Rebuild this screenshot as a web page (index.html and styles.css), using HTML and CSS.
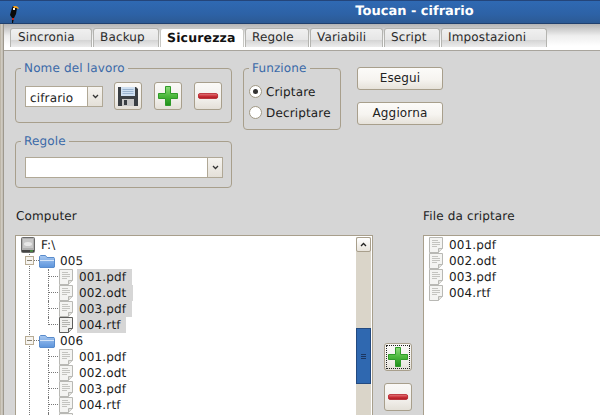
FILE: index.html
```html
<!DOCTYPE html>
<html lang="it">
<head>
<meta charset="utf-8">
<title>Toucan - cifrario</title>
<link rel="stylesheet" href="styles.css">
</head>
<body>
<svg class="defs" width="0" height="0" aria-hidden="true">
  <defs>
    <linearGradient id="gGreen" x1="0" y1="0" x2="0" y2="1"><stop offset="0" stop-color="#8fdc7c"/><stop offset=".5" stop-color="#4cb83c"/><stop offset="1" stop-color="#1f8f1a"/></linearGradient>
    <linearGradient id="gRed" x1="0" y1="0" x2="0" y2="1"><stop offset="0" stop-color="#e88a8a"/><stop offset=".5" stop-color="#cc3038"/><stop offset="1" stop-color="#a81c24"/></linearGradient>
    <linearGradient id="gFolder" x1="0" y1="0" x2="0" y2="1"><stop offset="0" stop-color="#a8c8f0"/><stop offset="1" stop-color="#5c94dc"/></linearGradient>
    <symbol id="plus" viewBox="0 0 22 22"><path d="M8.500 1.500h5v7h7v5h-7v7h-5v-7h-7v-5h7z" fill="url(#gGreen)" stroke="#2f9a28" stroke-width="1" stroke-linejoin="round"/></symbol>
    <symbol id="minus" viewBox="0 0 22 8"><rect x=".5" y="1.500" width="20" height="5" rx="1.500" fill="url(#gRed)" stroke="#b82830"/></symbol>
    <symbol id="floppy" viewBox="0 0 20 20"><path d="M0 1h18l2 2v17H0z" fill="#3a3f44"/><rect x="3" y="1" width="14" height="9" fill="#cfe0f2"/><path d="M4.500 3.500h11M4.500 5.500h11M4.500 7.500h11" stroke="#9ab4d0"/><rect x="4" y="13" width="12" height="7" fill="#c8c8c8"/><rect x="6" y="14" width="3" height="5" fill="#3a3f44"/></symbol>
    <symbol id="file" viewBox="0 0 14 16"><path d="M.5.500h13v11l-4 4h-9z" fill="#f4f4f2" stroke="#b8b8b4"/><path d="M9.500 15.500v-4h4" fill="#e0e0dc" stroke="#b8b8b4"/><path d="M3 3.500h6M3 5.500h8M3 7.500h8M3 9.500h5" stroke="#c4c4c0"/></symbol>
    <symbol id="fileDark" viewBox="0 0 14 16"><path d="M.5.500h13v11l-4 4h-9z" fill="#f0f0ee" stroke="#5e5e5c"/><path d="M9.500 15.500v-4h4" fill="#d8d8d4" stroke="#5e5e5c"/><path d="M3 3.500h6M3 5.500h8M3 7.500h8M3 9.500h5" stroke="#b4b4b0"/></symbol>
    <symbol id="folder" viewBox="0 0 16 14"><path d="M.5 13V2.500l1-1h5l1.500 2h7l.5 1V13l-.5.5H1z" fill="url(#gFolder)" stroke="#5a8ccc"/><path d="M1 6.500h14" stroke="#d4e4f8"/></symbol>
    <symbol id="drive" viewBox="0 0 14 16"><rect x=".5" y=".5" width="13" height="15" rx="1" fill="#b0b0b0" stroke="#6a6a6a"/><rect x="2" y="2" width="10" height="9" fill="#c8c8c8"/><ellipse cx="7" cy="7" rx="4" ry="2" fill="#e8e8e8"/><rect x="1" y="13" width="12" height="2" fill="#444"/><rect x="9" y="13.500" width="3" height="1" fill="#4ac040"/></symbol>
  </defs>
</svg>

<div class="window">
  <header class="titlebar">
    <svg class="logo" width="10" height="20" viewBox="0 0 10 20" aria-hidden="true"><path d="M3 20V15L1 12 3 5 4 3h2l2 2-1 6-2 4-1 5z" fill="#0a0a0a"/><path d="M4 3h3l2 1 1 2-3-1H5z" fill="#f0a020"/><path d="M4 5h2v2H4z" fill="#f4f4f4"/><path d="M3 15h2v2H3z" fill="#c02020"/></svg>
    <h1 class="title">Toucan - cifrario</h1>
  </header>

  <nav class="tabs">
    <span class="tab w-sincronia">Sincronia</span>
    <span class="tab w-backup">Backup</span>
    <span class="tab tab-active w-sicurezza">Sicurezza</span>
    <span class="tab w-regole">Regole</span>
    <span class="tab w-variabili">Variabili</span>
    <span class="tab w-script">Script</span>
    <span class="tab w-impostazioni">Impostazioni</span>
  </nav>

  <main class="page">
    <section class="top">
      <div class="left-groups">
        <fieldset class="group group-job">
          <legend>Nome del lavoro</legend>
          <div class="job-row">
            <div class="combo combo-job"><span class="combo-text">cifrario</span><span class="combo-arrow"><svg width="7" height="5" viewBox="0 0 7 5"><path d="M1 1l2.500 2.500L6 1" fill="none" stroke="#333" stroke-width="1.300"/></svg></span></div>
            <button class="icon-btn" type="button" aria-label="Salva"><svg width="20" height="20"><use href="#floppy"/></svg></button>
            <button class="icon-btn" type="button" aria-label="Aggiungi"><svg width="22" height="22"><use href="#plus"/></svg></button>
            <button class="icon-btn" type="button" aria-label="Rimuovi"><svg width="21" height="8"><use href="#minus"/></svg></button>
          </div>
        </fieldset>
        <fieldset class="group group-rules">
          <legend>Regole</legend>
          <div class="rules-row">
            <div class="combo combo-rules"><span class="combo-text"></span><span class="combo-arrow"><svg width="7" height="5" viewBox="0 0 7 5"><path d="M1 1l2.500 2.500L6 1" fill="none" stroke="#333" stroke-width="1.300"/></svg></span></div>
          </div>
        </fieldset>
      </div>

      <fieldset class="group group-func">
        <legend>Funzione</legend>
        <div class="radios">
          <label class="radio"><span class="radio-dot radio-on"></span>Criptare</label>
          <label class="radio"><span class="radio-dot"></span>Decriptare</label>
        </div>
      </fieldset>

      <div class="actions">
        <button class="btn" type="button">Esegui</button>
        <button class="btn" type="button">Aggiorna</button>
      </div>
    </section>

    <section class="bottom">
      <div class="col-tree">
        <div class="col-label">Computer</div>
        <div class="box tree-box">
          <div class="tree">
            <div class="row row-root"><svg class="ic" width="14" height="16"><use href="#drive"/></svg><span class="txt">F:\</span></div>
            <div class="row row-folder"><span class="exp"></span><svg class="ic" width="16" height="14"><use href="#folder"/></svg><span class="txt">005</span></div>
            <div class="row row-file"><svg class="ic" width="14" height="16"><use href="#file"/></svg><span class="txt sel sel-a">001.pdf</span></div>
            <div class="row row-file"><svg class="ic" width="14" height="16"><use href="#file"/></svg><span class="txt sel sel-b">002.odt</span></div>
            <div class="row row-file"><svg class="ic" width="14" height="16"><use href="#file"/></svg><span class="txt sel sel-a">003.pdf</span></div>
            <div class="row row-file row-last"><svg class="ic" width="14" height="16"><use href="#fileDark"/></svg><span class="txt sel sel-c">004.rtf</span></div>
            <div class="row row-folder"><span class="exp"></span><svg class="ic" width="16" height="14"><use href="#folder"/></svg><span class="txt">006</span></div>
            <div class="row row-file"><svg class="ic" width="14" height="16"><use href="#file"/></svg><span class="txt">001.pdf</span></div>
            <div class="row row-file"><svg class="ic" width="14" height="16"><use href="#file"/></svg><span class="txt">002.odt</span></div>
            <div class="row row-file"><svg class="ic" width="14" height="16"><use href="#file"/></svg><span class="txt">003.pdf</span></div>
            <div class="row row-file"><svg class="ic" width="14" height="16"><use href="#file"/></svg><span class="txt">004.rtf</span></div>
            <div class="row row-file"><svg class="ic" width="14" height="16"><use href="#file"/></svg></div>
          </div>
          <div class="scrollbar">
            <div class="sb-up"><svg width="7" height="5" viewBox="0 0 7 5"><path d="M1 4l2.500-2.500L6 4" fill="none" stroke="#222" stroke-width="1.300"/></svg></div>
            <div class="sb-thumb"><span class="grip"></span></div>
          </div>
        </div>
      </div>

      <div class="col-mid">
        <button class="icon-btn icon-btn-focus" type="button" aria-label="Aggiungi"><svg width="22" height="22"><use href="#plus"/></svg></button>
        <button class="icon-btn" type="button" aria-label="Rimuovi"><svg width="21" height="8"><use href="#minus"/></svg></button>
      </div>

      <div class="col-list">
        <div class="col-label">File da criptare</div>
        <div class="box list-box">
          <div class="row"><svg class="ic" width="14" height="16"><use href="#file"/></svg><span class="txt">001.pdf</span></div>
          <div class="row"><svg class="ic" width="14" height="16"><use href="#file"/></svg><span class="txt">002.odt</span></div>
          <div class="row"><svg class="ic" width="14" height="16"><use href="#file"/></svg><span class="txt">003.pdf</span></div>
          <div class="row"><svg class="ic" width="14" height="16"><use href="#file"/></svg><span class="txt">004.rtf</span></div>
        </div>
      </div>
    </section>
  </main>
</div>
</body>
</html>
```

FILE: styles.css
```css
* { box-sizing: border-box; }
html, body { margin: 0; height: 100%; overflow: hidden; }
body { font: 12px/14px "DejaVu Sans", sans-serif; letter-spacing: .15px; color: #1a1a1a; background: #d6d6d6; text-rendering: geometricPrecision; }
.defs { position: absolute; }

.window { width: 600px; height: 415px; display: flex; flex-direction: column; overflow: hidden; }

.titlebar {
  flex: none; height: 24px; position: relative; display: flex; align-items: center; justify-content: center;
  padding-left: 229px;
  background: linear-gradient(#2f69b3, #2d62a6 60%, #2c5a94);
  border-top: 1px solid #24457a; border-bottom: 1px solid #20406e;
}
.logo { position: absolute; left: 9px; top: 2px; }
.title { margin: 0; font: bold 13px/16px "DejaVu Sans", sans-serif; letter-spacing: 0; color: #fff; }

.tabs {
  flex: none; height: 27px; display: flex; align-items: flex-end; gap: 1px;
  margin-left: 4px; padding: 4px 0 3px 6px;
  background: linear-gradient(#b4b4b4, #eeeeee 45%, #ffffff 85%);
  border-bottom: 1px solid #a8a49c;
}
.tab {
  height: 19px; padding: 1px 0 0 6px; color: #2a2a2a;
  border: 1px solid #b4b4b0; border-bottom: 0; border-radius: 3px 3px 0 0;
  background: linear-gradient(#f0f0f0, #e6e6e6 60%, #d4d4d4 62%, #ececec);
}
.tab-active { background: #fff; font-size: 12.5px; letter-spacing: .15px; font-weight: bold; color: #111; border-color: #c8c8c4; padding-top: 2px; }
.w-sincronia { width: 82px; padding-left: 7px; }
.w-backup { width: 66px; }
.w-sicurezza { width: 84px; }
.w-regole { width: 64px; }
.w-variabili { width: 73px; }
.w-script { width: 56px; }
.w-impostazioni { width: 106px; }

.page { flex: 1; min-height: 0; margin-left: 4px; position: relative; padding-left: 11px; }
.window::before {
  content: ""; position: absolute; left: 0; top: 24px; bottom: 0; width: 4px;
  background: linear-gradient(90deg, #b4ac9c, #d8d4cc 50%, #8a8478);
}

.top { display: flex; align-items: flex-start; padding-top: 10px; height: 158px; }
.left-groups { flex: none; width: 217px; display: flex; flex-direction: column; gap: 11px; }

.group { margin: 0; padding: 0; min-width: 0; border: 1px solid #a89f8c; border-radius: 4px; }
.group legend { margin-left: 5px; padding: 0 3px; color: #3a69a8; line-height: 14px; font-size: 12px; }
.group-job { height: 62px; }
.group-rules { height: 54px; }
.group-func { flex: none; width: 98px; height: 69px; margin-left: 11px; }

.job-row { display: flex; align-items: center; gap: 12px; padding: 7px 0 0 9px; }
.rules-row { padding: 9px 0 0 9px; }
.radios { padding: 6px 0 0 5px; }

.combo { display: flex; height: 21px; background: #fff; border: 1px solid #b0a896; }
.combo-job { flex: none; width: 78px; margin-right: -1px; }
.combo-rules { width: 198px; }
.combo-text { flex: 1; padding: 4px 0 0 4px; }
.combo-arrow {
  width: 15px; display: flex; align-items: center; justify-content: center;
  background: linear-gradient(#f6f4f0, #e4e0d8); border-left: 1px solid #b0a896;
}

.icon-btn {
  flex: none; width: 28px; height: 28px; padding: 0;
  display: flex; align-items: center; justify-content: center;
  border: 1px solid #a89f8c; border-radius: 3px;
  background: linear-gradient(#faf9f7, #f2f0ec 60%, #e4e0d8);
}

.radio { display: flex; align-items: center; height: 21px; gap: 4px; color: #1a1a1a; }
.radio-dot {
  flex: none; width: 13px; height: 13px; border: 1px solid #a09884; border-radius: 50%; background: #fff;
  display: flex; align-items: center; justify-content: center;
}
.radio-on::after { content: ""; width: 5px; height: 5px; border-radius: 50%; background: #333; }

.actions { margin-left: 16px; margin-top: 6px; display: flex; flex-direction: column; gap: 12px; }
.btn {
  width: 86px; height: 23px; padding: 0 0 2px; font: 12px "DejaVu Sans", sans-serif; letter-spacing: .15px; color: #222;
  border: 1px solid #a89f8c; border-radius: 3px;
  background: linear-gradient(#fcfbf9, #f6f4f0 55%, #e6e2da);
}

.bottom { display: flex; align-items: flex-start; }
.col-label { height: 14px; margin-bottom: 12px; padding-left: 1px; color: #222; }
.col-tree { flex: none; width: 358px; }
.box { background: #fff; border: 1px solid #a89f8c; border-bottom: 0; height: 220px; }
.tree-box { display: flex; overflow: hidden; position: relative; }
.tree { flex: 1; padding-top: 1px; position: relative; }
.tree::before { content: ""; position: absolute; left: 13px; top: 16px; bottom: 0; border-left: 1px dotted #777; }

.row { height: 16px; display: flex; align-items: center; position: relative; }
.ic { flex: none; }
.txt { line-height: 16px; white-space: nowrap; }
.row-root { padding-left: 5px; }
.row-root .txt { margin-left: 6px; }
.row-folder { padding-left: 23px; }
.row-folder .txt { margin-left: 5px; }
.row-file { padding-left: 43px; }
.row-file .txt { margin-left: 6px; }
.row-file .sel { margin-left: 4px; padding-left: 2px; background: #d6d6d6; }
.sel-a { width: 55px; }
.sel-b { width: 56px; }
.sel-c { width: 49px; }

.exp { position: absolute; left: 9px; top: 3px; width: 9px; height: 9px; border: 1px solid #b8ac94; background: #f6f4f0; z-index: 1; }
.exp::after { content: ""; position: absolute; left: 1px; top: 3px; width: 5px; height: 1px; background: #8a826f; }
.row-folder::before { content: ""; position: absolute; left: 18px; top: 7px; width: 5px; border-top: 1px dotted #777; }
.row-file::before { content: ""; position: absolute; left: 32px; top: 7px; width: 10px; border-top: 1px dotted #777; }
.row-file::after { content: ""; position: absolute; left: 32px; top: 0; height: 16px; border-left: 1px dotted #777; }
.row-last::after { height: 8px; }

.scrollbar { flex: none; width: 16px; position: relative; margin: 1px 0 0; background: linear-gradient(90deg, #dad5c9 15px, #fff 15px); }
.sb-up {
  width: 15px; height: 15px; display: flex; align-items: center; justify-content: center;
  border: 1px solid #a89f8c; border-radius: 2px; background: linear-gradient(#fff, #e8e4dc);
}
.sb-thumb {
  position: absolute; left: 0; width: 15px; top: 91px; height: 56px; background: #2f68b0;
  border: 1px solid #234a80; display: flex; align-items: center; justify-content: center;
}
.grip { width: 5px; height: 5px; border-top: 1px solid #1b3660; border-bottom: 1px solid #1b3660; position: relative; }
.grip::after { content: ""; position: absolute; left: 0; right: 0; top: 1px; border-top: 1px solid #1b3660; }

.col-mid { flex: none; width: 50px; padding: 134px 0 0 11px; display: flex; flex-direction: column; gap: 12px; }
.icon-btn-focus svg { outline: 1px dotted #222; outline-offset: 0; }

.col-list { flex: none; width: 180px; }
.col-list .col-label { padding-left: 0; }
.list-box { padding: 1px 0 0 5px; border-right: 0; }
.list-box .txt { margin-left: 6px; }
```
